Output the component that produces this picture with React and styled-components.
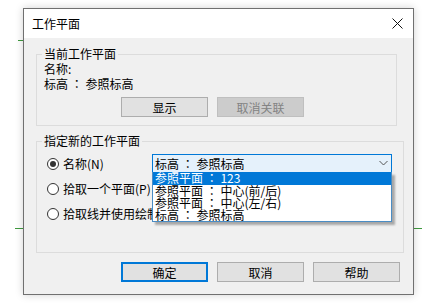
import React from 'react'
import styled, { createGlobalStyle } from 'styled-components'

const GlobalStyle = createGlobalStyle`
  html, body {
    margin: 0;
    padding: 0;
    background: #fff;
  }
  body {
    font-family: "Noto Sans CJK SC", "Microsoft YaHei", sans-serif;
    font-size: 12px;
    color: #000;
  }
`

const Canvas = styled.div`
  position: relative;
  width: 441px;
  height: 308px;
  overflow: hidden;
  padding: 8px 0 0 23px;
  box-sizing: border-box;
`

const GridLine = styled.div`
  position: absolute;
  height: 1px;
  background: #3f9a3f;
  top: ${({ $y }) => $y}px;
  left: ${({ $x }) => $x}px;
  width: ${({ $w }) => $w}px;
`

const Window = styled.div`
  position: relative;
  z-index: 1;
  width: 391px;
  height: 287px;
  box-sizing: border-box;
  border: 1px solid #707070;
  background: #f0f0f0;
  box-shadow: 0 0 8px rgba(0, 0, 0, 0.18);
  display: flex;
  flex-direction: column;
`

const TitleBar = styled.div`
  height: 29px;
  background: #fff;
  display: flex;
  align-items: center;
  justify-content: space-between;
  padding: 0 10px 0 8px;
  font-size: 12px;
`

const Body = styled.div`
  padding: 9px 0 0 12px;
  display: flex;
  flex-direction: column;
`

const Group = styled.fieldset`
  margin: ${({ $top }) => $top || 0}px 0 0 0;
  padding: ${({ $padTop }) => $padTop || 0}px 7px ${({ $padBottom }) => $padBottom}px 7px;
  border: 1px solid #dcdcdc;
  width: ${({ $w }) => $w}px;
  box-sizing: border-box;
  min-width: 0;
`

const Legend = styled.legend`
  padding: 0 2px;
  margin-left: -2px;
  line-height: 14px;
  font-size: 12px;
`

const InfoLine = styled.div`
  line-height: 15px;
`

// centred full-width colon, as the dialog font draws it
const Colon = styled.span`
  font-family: "Noto Sans CJK TC", "Noto Sans CJK SC", sans-serif;
`

const ButtonRow = styled.div`
  display: flex;
  gap: 9px;
  margin: 6px 0 0 77px;
`

const Button = styled.div`
  width: 87px;
  height: 20px;
  box-sizing: border-box;
  display: flex;
  align-items: center;
  justify-content: center;
  background: ${({ $disabled }) => ($disabled ? '#cccccc' : '#e1e1e1')};
  border: ${({ $default }) => ($default ? '2px solid #0078d7' : '1px solid #adadad')};
  border-color: ${({ $disabled }) => ($disabled ? '#bfbfbf' : undefined)};
  color: ${({ $disabled }) => ($disabled ? '#838383' : '#000')};
  font-size: 12px;
`

const RadioRow = styled.div`
  display: flex;
  align-items: center;
  height: 25px;
  padding-left: 3px;
  white-space: nowrap;
`

const Radio = styled.span`
  width: 12px;
  height: 12px;
  box-sizing: border-box;
  border: 1px solid #333;
  border-radius: 50%;
  background: #fff;
  margin-right: 4px;
  flex: none;
  display: flex;
  align-items: center;
  justify-content: center;
  &::after {
    content: '';
    display: ${({ $checked }) => ($checked ? 'block' : 'none')};
    width: 6px;
    height: 6px;
    border-radius: 50%;
    background: #333;
  }
`

const RadioLabel = styled.span`
  width: 89px;
  flex: none;
`

const Radios = styled.div`
  padding-top: 3px;
`

const Combo = styled.div`
  position: relative;
  width: 240px;
  height: 19px;
  margin-top: -1px;
  box-sizing: border-box;
  border: 1px solid #0078d7;
  background: #e5f1fb;
  display: flex;
  align-items: center;
  justify-content: space-between;
  padding: 0 3px 0 2px;
`

const DropList = styled.div`
  position: absolute;
  top: 100%;
  left: -1px;
  width: 240px;
  height: 50px;
  box-sizing: border-box;
  border: 1px solid #4a8cc4;
  border-top: none;
  background: #fff;
  box-shadow: 3px 3px 2px rgba(0, 0, 0, 0.3);
  z-index: 2;
  overflow: hidden;
`

const DropItem = styled.div`
  height: ${({ $active }) => ($active ? 13 : 12.3)}px;
  line-height: 12px;
  padding-left: 2px;
  background: ${({ $active }) => ($active ? '#0078d7' : 'transparent')};
  color: ${({ $active }) => ($active ? '#fff' : '#000')};
  white-space: nowrap;
`

const Footer = styled.div`
  display: flex;
  justify-content: flex-end;
  gap: 9px;
  margin-top: 9px;
  padding-right: 13px;
`

const items = [
  ['参照平面', '123'],
  ['参照平面', '中心(前/后)'],
  ['参照平面', '中心(左/右)'],
  ['标高', '参照标高'],
]

const Pair = ({ k, v }) => (
  <span>
    {k} <Colon>：</Colon> {v}
  </span>
)

const App = () => (
  <Canvas>
    <GlobalStyle />
    <GridLine $x={18} $y={40} $w={6} />
    <GridLine $x={15} $y={228} $w={9} />
    <GridLine $x={413} $y={228} $w={9} />
    <Window>
      <TitleBar>
        <span>工作平面</span>
        <svg width="11" height="11" viewBox="0 0 11 11">
          <path d="M0.5 0.5 L10.5 10.5 M10.5 0.5 L0.5 10.5" stroke="#111" strokeWidth="1" fill="none" />
        </svg>
      </TitleBar>
      <Body>
        <Group $w={361} $padBottom={8}>
          <Legend>当前工作平面</Legend>
          <InfoLine>名称:</InfoLine>
          <InfoLine>
            <Pair k="标高" v="参照标高" />
          </InfoLine>
          <ButtonRow>
            <Button>显示</Button>
            <Button $disabled>取消关联</Button>
          </ButtonRow>
        </Group>
        <Group $w={368} $top={8} $padBottom={26}>
          <Legend>指定新的工作平面</Legend>
          <Radios>
            <RadioRow>
              <Radio $checked />
              <RadioLabel>名称(N)</RadioLabel>
              <Combo>
                <Pair k="标高" v="参照标高" />
                <svg width="9" height="6" viewBox="0 0 9 6">
                  <path d="M0.5 1 L4.5 5 L8.5 1" stroke="#555" strokeWidth="1" fill="none" />
                </svg>
                <DropList>
                  {items.map(([k, v], i) => (
                    <DropItem key={k + v} $active={i === 0}>
                      <Pair k={k} v={v} />
                    </DropItem>
                  ))}
                </DropList>
              </Combo>
            </RadioRow>
            <RadioRow>
              <Radio />
              <span>拾取一个平面(P)</span>
            </RadioRow>
            <RadioRow>
              <Radio />
              <span>拾取线并使用绘制该线的工作平面(L)</span>
            </RadioRow>
          </Radios>
        </Group>
        <Footer>
          <Button $default>确定</Button>
          <Button>取消</Button>
          <Button>帮助</Button>
        </Footer>
      </Body>
    </Window>
  </Canvas>
)

export default App
